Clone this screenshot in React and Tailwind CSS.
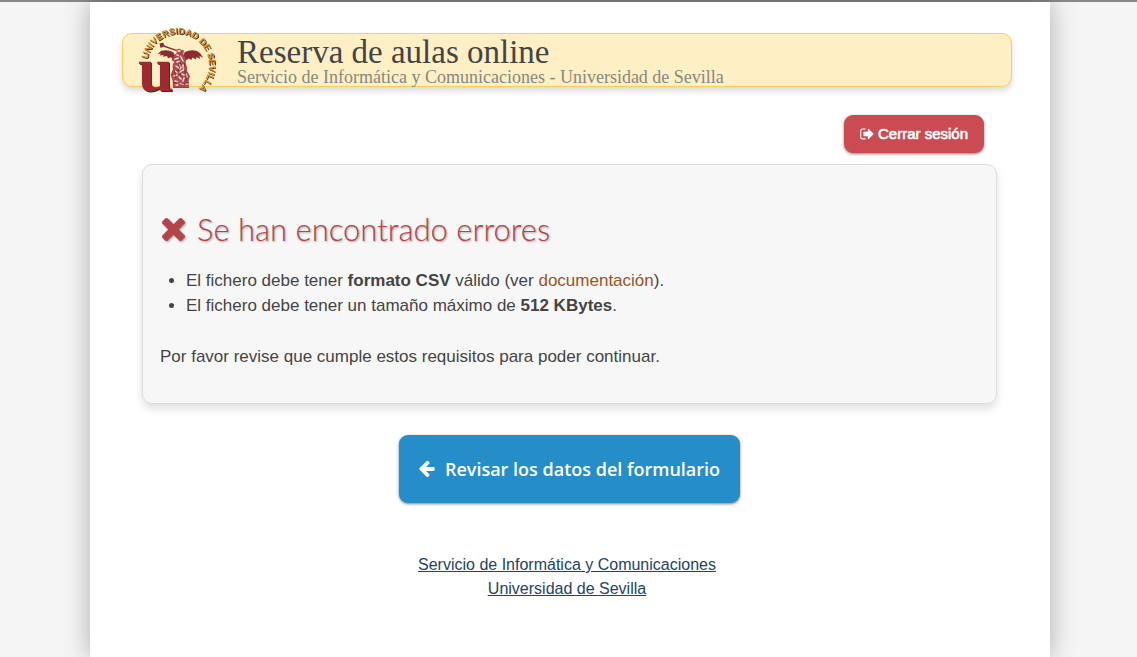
import React from "react";

function CrossIcon({ className }) {
  return (
    <svg viewBox="302 366 1188 1188" fill="currentColor" aria-hidden="true" className={className}>
      <path d="M1490 1322q0 40-28 68l-136 136q-28 28-68 28t-68-28l-294-294-294 294q-28 28-68 28t-68-28l-136-136q-28-28-28-68t28-68l294-294-294-294q-28-28-28-68t28-68l136-136q28-28 68-28t68 28l294 294 294-294q28-28 68-28t68 28l136 136q28 28 28 68t-28 68l-294 294 294 294q28 28 28 68z" />
    </svg>
  );
}

function SignOutIcon({ className }) {
  return (
    <svg viewBox="64 200 1600 1400" fill="currentColor" aria-hidden="true" className={className}>
      <path d="M704 1440q0 4 1 20t.5 26.5-3 23.5-10 19.5-20.5 6.5h-320q-119 0-203.5-84.5t-84.5-203.5v-704q0-119 84.5-203.5t203.5-84.5h320q13 0 22.5 9.5t9.5 22.5q0 4 1 20t.5 26.5-3 23.5-10 19.5-20.5 6.5h-320q-66 0-113 47t-47 113v704q0 66 47 113t113 47h312l11.5 1 11.5 3 8 5.5 7 9 2 13.5zm928-544q0 26-19 45l-544 544q-19 19-45 19t-45-19-19-45v-288h-448q-26 0-45-19t-19-45v-384q0-26 19-45t45-19h448v-288q0-26 19-45t45-19 45 19l544 544q19 19 19 45z" />
    </svg>
  );
}

function ArrowLeftIcon({ className }) {
  return (
    <svg viewBox="160 200 1536 1536" fill="currentColor" aria-hidden="true" className={className}>
      <path d="M1664 896v128q0 53-32.5 90.5t-84.5 37.5h-704l293 294q38 36 38 90t-38 90l-75 76q-37 37-90 37-52 0-91-37l-651-652q-37-37-37-90 0-52 37-91l651-650q38-38 91-38 52 0 90 38l75 74q38 38 38 91t-38 91l-293 293h704q52 0 84.5 37.5t32.5 90.5z" />
    </svg>
  );
}

function Logo() {
  return (
    <svg viewBox="0 0 94 78" aria-hidden="true" className="-my-3 h-[78px] w-[94px] shrink-0 overflow-visible">
      <defs>
        <path id="ring" d="M17.5 38 A31 31 0 1 1 48 75" />
      </defs>
      <text fontFamily="Liberation Sans, sans-serif" fontWeight="700" fontSize="9" fill="#cf8a2b" className="drop-shadow-[1px_1px_0px_#5a3412]">
        <textPath href="#ring">UNIVERSIDAD DE SEVILLA</textPath>
      </text>
      <text x="8" y="70" fontFamily="Liberation Serif, serif" fontWeight="700" fontSize="64" fill="#9c2a30" className="drop-shadow-[1px_1px_0px_#3c3032]">u</text>
      {/* wings */}
      <path fill="#8c2b31" d="M46 36 L43 31 Q37 28 31 30 L27.5 33 L31 32.6 L29.5 34.4 L33.5 34 L33 35.8 L37 35 L38 37.2 L41 36.2 L43 39z" />
      <path fill="#8c2b31" d="M52 36 L55 31 Q61 28 67 30 Q71 32 73 37 L69.5 34.8 L70 38 L66.5 36 L66 38.5 L62.5 36.6 L61.5 38.8 L58.5 37.4 L55 40z" />
      {/* trumpet */}
      <path fill="#8c2b31" d="M29.5 22.5 L33 21.5 L34.5 24.6 L46.5 28.8 L46 30 L33.5 25.8 L30.5 27z" />
      {/* figure */}
      <path fill="#b0474d" d="M46 29 Q49 26.5 51.5 29 Q53.5 28 54 30.5 L53 33 Q57 37 55.5 42 Q58 46 57 50 L60 55 L58.5 60 L59 66.5 L43 66.5 L42.5 59 L40.5 54 L43 48 Q41.5 44 44.5 41 L41.5 39 L43.5 36 Q45 33 46.8 32z" />
      <g fill="none" stroke="#fbe9d8" strokeLinecap="round" strokeWidth="1.5">
        <path d="M48 30h2M47 34l3 1M45 38l4-1M51 36l2 4M47 41l3-1M46 45l4 3M53 44l1 5M45 50l3 2M50 51l3-2M56 53l1 3M44 55l3-1M49 56l2 2M54 57l-1 3M45 60l3 1M50 62l3 1M56 63h1M46 64l2 0M50 44l1 3M52 53l2 1" />
      </g>
      <g fill="none" stroke="#6e2026" strokeWidth=".7">
        <path d="M50 33q-2 4 0 7t-1 8 2 6M55 42q-2 5 0 9t1 10M44 49q2 4 1 8M43 62q5-2 8 0t8-1M43 66.5h16" />
      </g>
    </svg>
  );
}

export default function App() {
  return (
    <div className="min-h-screen border-t-2 border-[#888888] bg-[#f5f5f5] pl-[3px] font-['Liberation_Sans',Arial,sans-serif] text-[#444444]">
      <div className="mx-auto min-h-[calc(100vh-2px)] max-w-[960px] bg-white pt-[31px] pr-[38px] pb-12 pl-8 shadow-[0_0_24px_rgba(0,0,0,0.3)]">
        <header className="flex h-[54px] items-center rounded-[10px] border border-[#ffcc55] bg-[#ffefc5] pl-[7px] shadow-[0_4px_6px_rgba(0,0,0,0.14)]">
          <Logo />
          <div className="ml-[13px] font-['Liberation_Serif',serif]">
            <h1 className="text-[33px] leading-[34px]">Reserva de aulas online</h1>
            <p className="text-lg leading-4 text-[#888880]">Servicio de Informática y Comunicaciones - Universidad de Sevilla</p>
          </div>
        </header>

        <div className="mt-7 flex justify-end pr-7">
          <button type="button" className="flex h-[38px] items-center gap-1 rounded-[9px] bg-[#ca4b51] px-4 text-[15px] text-white shadow-[0_1px_3px_rgba(0,0,0,0.5)] [-webkit-text-stroke:0.6px_white]">
            <SignOutIcon className="h-3 w-[14px]" />
            Cerrar sesión
          </button>
        </div>

        <main className="pr-[15px] pl-5">
          <section className="mt-[11px] rounded-[10px] border border-[#dddddd] bg-[#f7f7f7] px-[17px] pt-11 pb-[34px] shadow-[0_5px_8px_rgba(0,0,0,0.12)]">
            <h2 className="flex items-center gap-3 font-[Lato,sans-serif] text-[31px] leading-10 font-light text-[#b34548] [text-shadow:1px_1px_2px_rgba(0,0,0,0.35)]">
              <CrossIcon className="ml-0.5 size-[23px] drop-shadow-[1px_1px_1px_rgba(0,0,0,0.35)]" />
              Se han encontrado errores
            </h2>
            <ul className="mt-[19px] list-disc pl-[26px] text-[17px] leading-[25px]">
              <li>El fichero debe tener <strong>formato CSV</strong> válido (ver <a href="#documentacion" className="text-[#995522]">documentación</a>).</li>
              <li>El fichero debe tener un tamaño máximo de <strong>512 KBytes</strong>.</li>
            </ul>
            <p className="mt-[26px] text-[17px] leading-[25px]">Por favor revise que cumple estos requisitos para poder continuar.</p>
          </section>

          <div className="mt-[31px] flex justify-center">
            <button type="button" className="flex h-[68px] items-center gap-2.5 rounded-[9px] bg-[#258dc8] px-5 font-['Open_Sans',sans-serif] text-lg font-semibold text-white shadow-[0_1px_3px_rgba(0,0,0,0.5)]">
              <ArrowLeftIcon className="size-4" />
              Revisar los datos del formulario
            </button>
          </div>
        </main>

        <footer className="mt-[50px] flex flex-col items-center text-base leading-6 text-[#224466] underline">
          <a href="#servicio">Servicio de Informática y Comunicaciones</a>
          <a href="#universidad">Universidad de Sevilla</a>
        </footer>
      </div>
    </div>
  );
}
